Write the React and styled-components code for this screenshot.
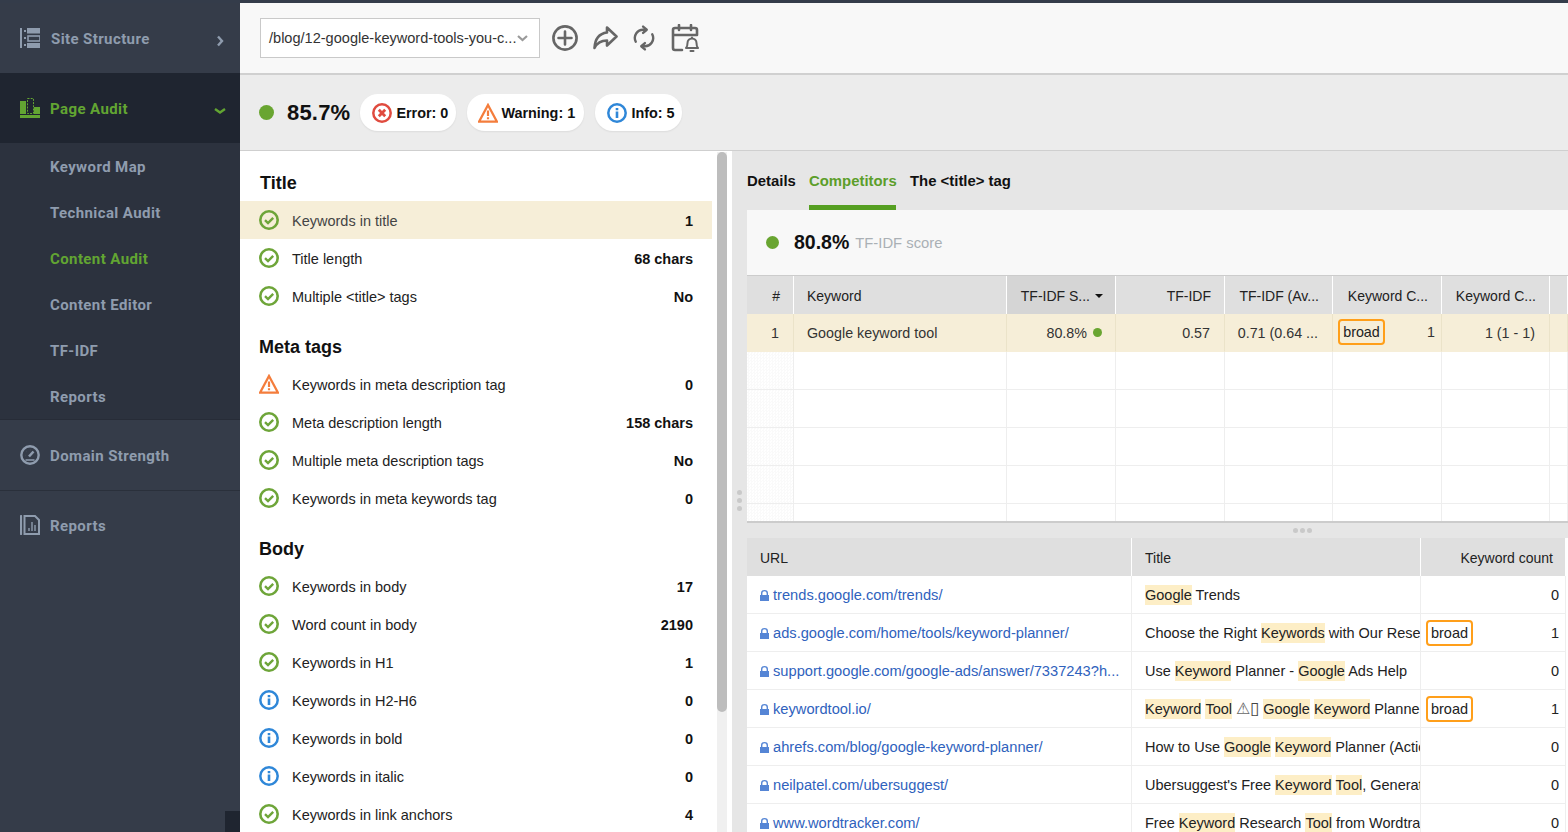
import React from "react";
import styled, { createGlobalStyle } from "styled-components";

const Global = createGlobalStyle`
  html, body { margin: 0; padding: 0; height: 832px; overflow: hidden; background: #fff; }
  body { font-family: "Liberation Sans", Arial, sans-serif; font-size: 14.5px; color: #222; }
  #root { height: 832px; }
  * { box-sizing: border-box; }
`;

const Root = styled.div`
  display: flex;
  width: 1568px;
  height: 832px;
  overflow: hidden;
  border-top: 3px solid #343c4a;
`;

const Sidebar = styled.nav`
  position: relative;
  flex: 0 0 240px;
  display: flex;
  flex-direction: column;
  background: #353c49;
  font-family: Roboto, "Liberation Sans", sans-serif;
  font-weight: 700;
  font-size: 15px;
  letter-spacing: 0.4px;
  color: #8f9cae;
`;

const NavRow = styled.div`
  display: flex;
  align-items: center;
  height: ${(p) => p.$h || 70}px;
  padding: 0 14px 0 20px;
  gap: ${(p) => p.$gap || 10}px;
  background: ${(p) => (p.$active ? "#1f2530" : "transparent")};
  color: ${(p) => (p.$active ? "#62a532" : "inherit")};
  border-bottom: ${(p) => (p.$divider ? "1px solid #2a303b" : "0")};
`;

const NavLabel = styled.span`
  padding-top: ${(p) => p.$pt ?? 2}px;
`;

const NavChevron = styled.svg`
  margin: 6px 0 0 auto;
  width: 12px;
  height: 12px;
  fill: none;
  stroke: currentColor;
  stroke-width: 2.4;
`;

const SubNav = styled.div`
  display: flex;
  flex-direction: column;
  background: #2c323e;
  height: 277px;
  padding-top: 0.5px;
  border-bottom: 1px solid #272c37;
`;

const SubItem = styled.div`
  flex: none;
  display: flex;
  align-items: center;
  height: 46px;
  padding-left: 50px;
  color: ${(p) => (p.$active ? "#62a532" : "#8f9cae")};
`;

const CornerBox = styled.div`
  position: absolute;
  right: 0;
  bottom: 0;
  width: 15px;
  height: 21px;
  background: #1f2530;
`;

const Main = styled.div`
  flex: 1;
  min-width: 0;
  display: flex;
  flex-direction: column;
`;

const Toolbar = styled.div`
  flex: 0 0 72px;
  display: flex;
  align-items: center;
  padding: 0 20px;
  background: #f8f8f8;
  border-bottom: 2px solid #d0d0d0;
`;

const PageSelect = styled.div`
  display: flex;
  align-items: center;
  justify-content: space-between;
  width: 280px;
  height: 40px;
  padding: 0 11px 0 8px;
  background: #fff;
  border: 1px solid #c9c9c9;
  font-size: 14.55px;
  color: #333;
  margin-right: 11px;
`;

const ToolIcon = styled.svg`
  flex: none;
  width: ${(p) => p.$w}px;
  height: 28px;
  margin-right: ${(p) => p.$mr}px;
  fill: none;
  stroke: #666;
  stroke-width: 2.6;
  stroke-linecap: round;
  stroke-linejoin: round;
`;

const StatusBar = styled.div`
  flex: 0 0 76px;
  display: flex;
  align-items: center;
  padding: 0 0 0 19px;
  background: #ececec;
  border-bottom: 1px solid #cfcfcf;
`;

const Dot = styled.span`
  flex: none;
  display: inline-block;
  width: ${(p) => p.$size}px;
  height: ${(p) => p.$size}px;
  border-radius: 50%;
  background: #69a531;
`;

const Score = styled.strong`
  font-size: 22px;
  letter-spacing: 0.2px;
  color: #111;
  margin: 0 10px 0 13px;
`;

const Pill = styled.div`
  display: flex;
  align-items: center;
  gap: ${(p) => p.$gap ?? 4}px;
  width: ${(p) => p.$w}px;
  height: 37px;
  padding: 0 0 0 ${(p) => p.$pl ?? 12}px;
  margin-right: 11px;
  border-radius: 18px;
  background: #fff;
  box-shadow: 0 1px 2px rgba(0, 0, 0, 0.07);
  font-weight: 700;
  font-size: 14.4px;
  color: #111;
`;

const Content = styled.div`
  flex: 1;
  min-height: 0;
  display: flex;
`;

const LeftPanel = styled.div`
  flex: 0 0 492px;
  display: flex;
  background: #fff;
`;

const CheckList = styled.div`
  flex: 0 0 472px;
  overflow: hidden;
`;

const Track = styled.div`
  flex: 0 0 10px;
  margin: 1px 5px 0;
  background: #f0f0f0;
`;

const Thumb = styled.div`
  height: 560px;
  background: #bdbdbd;
  border-radius: 5px;
`;

const SectionHead = styled.h3`
  margin: 0;
  height: 50px;
  padding: 23px 0 0 ${(p) => p.$indent}px;
  font-size: 18px;
  line-height: 18px;
  font-weight: 700;
  color: #111;
`;

const CheckRow = styled.div`
  display: flex;
  align-items: center;
  height: 38px;
  padding: 0 19px;
  background: ${(p) => (p.$active ? "#f6eed8" : "transparent")};
  color: ${(p) => (p.$active ? "#444" : "#222")};
`;

const CheckLabel = styled.span`
  margin-left: 13px;
  padding-top: 2px;
`;

const CheckValue = styled.strong`
  margin-left: auto;
  padding-top: 2px;
  color: #111;
`;

const StatusIcon = styled.svg`
  flex: none;
  width: 20px;
  height: 20px;
  fill: none;
`;

const RightPanel = styled.div`
  flex: 1;
  min-width: 0;
  display: flex;
  background: #e6e6e6;
`;

const Gutter = styled.div`
  flex: 0 0 15px;
  display: flex;
  flex-direction: column;
  align-items: center;
  gap: 3px;
  padding-top: 339px;
`;

const GripDot = styled.span`
  display: block;
  width: 5px;
  height: 5px;
  border-radius: 50%;
  background: #c9c9c9;
`;

const Pane = styled.div`
  flex: 1;
  min-width: 0;
  display: flex;
  flex-direction: column;
`;

const Tabs = styled.div`
  flex: 0 0 59px;
  display: flex;
`;

const Tab = styled.div`
  width: ${(p) => p.$w}px;
  margin-right: ${(p) => p.$mr}px;
  height: 59px;
  padding-top: 22px;
  line-height: 16px;
  font-weight: 700;
  font-size: 14.9px;
  white-space: nowrap;
  color: ${(p) => (p.$active ? "#5c9e2a" : "#111")};
  border-bottom: 5px solid ${(p) => (p.$active ? "#559f21" : "transparent")};
`;

const ScoreCard = styled.div`
  flex: 0 0 66px;
  display: flex;
  align-items: center;
  padding-left: 19px;
  background: #f8f8f8;
  border-bottom: 1px solid #cccccc;
`;

const CardScore = styled.strong`
  font-size: 19.5px;
  color: #111;
  margin: 0 6px 0 15px;
`;

const CardLabel = styled.span`
  font-size: 14.8px;
  color: #aab0b5;
`;

const TableWrap = styled.div`
  flex: 0 0 ${(p) => p.$h}px;
  background: #fff;
  overflow: hidden;
  border-bottom: ${(p) => (p.$closed ? "2px solid #cccccc" : "0")};
`;

const Table = styled.table`
  table-layout: fixed;
  border-collapse: separate;
  border-spacing: 0;
  width: ${(p) => p.$w}px;
`;

const Th = styled.th`
  height: 38px;
  padding: 2px ${(p) => p.$pr ?? 13}px 0 ${(p) => p.$pl ?? 13}px;
  background: ${(p) => (p.$sorted ? "#d5d5d5" : "#dfdfdf")};
  border-right: 1px solid #fff;
  font-size: 14px;
  font-weight: 400;
  color: #222;
  text-align: ${(p) => p.$align || "right"};
  white-space: nowrap;
  overflow: hidden;
`;

const Caret = styled.span`
  display: inline-block;
  margin: 0 0 3px 5px;
  width: 0;
  height: 0;
  border-left: 4px solid transparent;
  border-right: 4px solid transparent;
  border-top: 4px solid #111;
`;

const Td = styled.td`
  height: 38px;
  padding: 0 ${(p) => p.$pr ?? 14}px ${(p) => p.$pb ?? 0}px ${(p) => p.$pl ?? 13}px;
  background: ${(p) => (p.$active ? "#f6eed8" : "transparent")};
  border-right: 1px solid ${(p) => (p.$active ? "#ebe3c9" : "#eeeeee")};
  border-bottom: 1px solid ${(p) => (p.$active ? "#f6eed8" : "#eeeeee")};
  font-size: 14.3px;
  color: ${(p) => (p.$active ? "#333" : "#222")};
  text-align: ${(p) => p.$align || "right"};
  white-space: nowrap;
  overflow: hidden;
`;

const TextureTd = styled(Td)`
  background-image: repeating-conic-gradient(#fafafa 0 25%, #fff 0 50%);
  background-size: 3px 3px;
`;

const UrlTd = styled(Td)`
  font-size: 14.67px;
`;

const TitleTd = styled(Td)`
  font-size: 14.5px;
`;

const CountTd = styled(Td)`
  font-size: 14.5px;
`;

const Inline = styled.span`
  display: flex;
  align-items: center;
  justify-content: ${(p) => p.$justify || "flex-end"};
  gap: ${(p) => p.$gap || 0}px;
`;

const Broad = styled.span`
  display: inline-block;
  width: 47px;
  height: 26px;
  line-height: 23px;
  text-align: center;
  border: 2px solid #ff9f1a;
  border-radius: 4px;
  color: #222;
`;

const SplitBar = styled.div`
  flex: 0 0 15px;
  display: flex;
  align-items: center;
  gap: 2px;
  padding-left: 546px;
`;

const UrlLink = styled.a`
  color: #2f62bd;
  text-decoration: none;
`;

const Lock = styled.svg`
  width: 9px;
  height: 11px;
  margin: 0 4px -1px 0;
  fill: #5585d5;
`;

const Mark = styled.span`
  display: inline-block;
  height: 20px;
  line-height: 20px;
  background: #fdeec6;
  color: #222;
`;

const WarnGlyph = styled.span`
  color: #666;
  font-size: 16px;
  line-height: 1;
`;

const TofuGlyph = styled.span`
  font-size: 17px;
  line-height: 1;
  font-weight: 400;
  color: #444;
`;

/* ---------- drawings ---------- */

const CheckIcon = () => (
  <StatusIcon viewBox="0 0 20 20">
    <circle cx="10" cy="10" r="8.7" stroke="#6ea539" strokeWidth="2.6" />
    <path d="M6 10.2l3 2.9 5.2-5.3" stroke="#6ea539" strokeWidth="2.4" />
  </StatusIcon>
);
const WarnIcon = () => (
  <StatusIcon viewBox="0 0 20 20">
    <path d="M10 2L19 18.7H1z" stroke="#f47d3c" strokeWidth="2.3" strokeLinejoin="miter" />
    <path d="M10 7.5v5.5M10 14.3v2" stroke="#f47d3c" strokeWidth="2.2" />
  </StatusIcon>
);
const InfoIcon = () => (
  <StatusIcon viewBox="0 0 20 20">
    <circle cx="10" cy="10" r="8.7" stroke="#2f87d8" strokeWidth="2.5" />
    <path d="M10 8.500v6.500M10 5v2.200" stroke="#2f87d8" strokeWidth="2.6" />
  </StatusIcon>
);
const ErrorIcon = () => (
  <StatusIcon viewBox="0 0 20 20">
    <circle cx="10" cy="10" r="8.7" stroke="#e04b3f" strokeWidth="2.5" />
    <path d="M6.800 6.800l6.400 6.400M13.200 6.800l-6.400 6.400" stroke="#e04b3f" strokeWidth="2.8" />
  </StatusIcon>
);
const icons = { ok: CheckIcon, warn: WarnIcon, info: InfoIcon };

const SiteIcon = () => (
  <svg width="20" height="20" viewBox="0 0 20 20" fill="#8f9cae">
    <rect x="0" y="0" width="2" height="20" />
    <rect x="4" y="2" width="2" height="2" />
    <rect x="4" y="9" width="2" height="2" />
    <rect x="4" y="16" width="2" height="2" />
    <rect x="7" y="0" width="13" height="5.500" />
    <rect x="8" y="8" width="12" height="5" fill="none" stroke="#8f9cae" strokeWidth="1.600" />
    <rect x="7" y="15" width="13" height="5" />
  </svg>
);
const AuditIcon = () => (
  <svg width="20" height="20" viewBox="0 0 20 20" fill="#62a532">
    <rect x="0" y="3" width="6" height="13" />
    <rect x="7.500" y="0.500" width="6" height="15" fill="none" stroke="#62a532" strokeDasharray="2 1.200" />
    <rect x="14" y="9" width="6" height="7" />
    <rect x="0" y="17" width="20" height="3" />
  </svg>
);
const GaugeIcon = () => (
  <svg width="20" height="20" viewBox="0 0 20 20" fill="none" stroke="#8f9cae" strokeWidth="2.400">
    <circle cx="10" cy="10" r="8.700" />
    <path d="M9 11.500l4.500-5" strokeWidth="2.600" />
    <path d="M5 10.500h.1M6.500 6.500h.1M10 5h.1M5.500 15h9" strokeWidth="1.600" />
  </svg>
);
const ReportIcon = () => (
  <svg width="20" height="20" viewBox="0 0 20 20" fill="none" stroke="#8f9cae">
    <path d="M1 1v18" strokeWidth="2.200" strokeLinecap="round" />
    <path d="M4.500 1H15l4 4v14H4.500z" strokeWidth="2" />
    <path d="M9 16v-3M12 16V7M15 16v-6" strokeWidth="1.400" />
  </svg>
);

const LockIcon = () => (
  <Lock viewBox="0 0 9 11">
    <path d="M0 5h1V3.200a3.500 3.200 0 0 1 7 0V5h1v6H0zM2.400 5h4.200V3.200a2.100 2 0 0 0-4.200 0z" />
  </Lock>
);

/* ---------- data ---------- */

const sections = [
  {
    title: "Title",
    indent: 20,
    rows: [
      ["ok", "Keywords in title", "1", true],
      ["ok", "Title length", "68 chars"],
      ["ok", "Multiple <title> tags", "No"],
    ],
  },
  {
    title: "Meta tags",
    indent: 19,
    rows: [
      ["warn", "Keywords in meta description tag", "0"],
      ["ok", "Meta description length", "158 chars"],
      ["ok", "Multiple meta description tags", "No"],
      ["ok", "Keywords in meta keywords tag", "0"],
    ],
  },
  {
    title: "Body",
    indent: 19,
    rows: [
      ["ok", "Keywords in body", "17"],
      ["ok", "Word count in body", "2190"],
      ["ok", "Keywords in H1", "1"],
      ["info", "Keywords in H2-H6", "0"],
      ["info", "Keywords in bold", "0"],
      ["info", "Keywords in italic", "0"],
      ["ok", "Keywords in link anchors", "4"],
    ],
  },
];

const subNav = ["Keyword Map", "Technical Audit", "Content Audit", "Content Editor", "TF-IDF", "Reports"];

const kwCols = [47, 213, 109, 109, 108, 109, 108, 18];
const urlCols = [385, 289, 145];

const K = ({ children }) => <Mark>{children}</Mark>;

const urlRows = [
  ["trends.google.com/trends/", <><K>Google</K> Trends</>, false, 0],
  ["ads.google.com/home/tools/keyword-planner/", <>Choose the Right <K>Keywords</K> with Our Research Tools</>, true, 1],
  ["support.google.com/google-ads/answer/7337243?h...", <>Use <K>Keyword</K> Planner - <K>Google</K> Ads Help</>, false, 0],
  ["keywordtool.io/", <><K>Keyword</K> <K>Tool</K> <WarnGlyph>⚠</WarnGlyph><TofuGlyph>▯</TofuGlyph> <K>Google</K> <K>Keyword</K> Planner Alternative</>, true, 1],
  ["ahrefs.com/blog/google-keyword-planner/", <>How to Use <K>Google</K> <K>Keyword</K> Planner (Actionable Guide)</>, false, 0],
  ["neilpatel.com/ubersuggest/", <>Ubersuggest's Free <K>Keyword</K> <K>Tool</K>, Generate Keyword Ideas</>, false, 0],
  ["www.wordtracker.com/", <>Free <K>Keyword</K> Research <K>Tool</K> from Wordtracker</>, false, 0],
];

export default function App() {
  return (
    <>
      <Global />
      <Root>
        <Sidebar>
          <NavRow $gap={11}>
            <SiteIcon />
            <NavLabel>Site Structure</NavLabel>
            <NavChevron viewBox="0 0 12 12"><path d="M4 1.500l4 4.500-4 4.500" /></NavChevron>
          </NavRow>
          <NavRow $active>
            <AuditIcon />
            <NavLabel>Page Audit</NavLabel>
            <NavChevron viewBox="0 0 12 12"><path d="M1 4l5 3.500L11 4" /></NavChevron>
          </NavRow>
          <SubNav>
            {subNav.map((s) => (
              <SubItem key={s} $active={s === "Content Audit"}>{s}</SubItem>
            ))}
          </SubNav>
          <NavRow $divider $h={71}>
            <GaugeIcon />
            <NavLabel $pt={1}>Domain Strength</NavLabel>
          </NavRow>
          <NavRow $h={68}>
            <ReportIcon />
            <NavLabel $pt={1}>Reports</NavLabel>
          </NavRow>
          <CornerBox />
        </Sidebar>

        <Main>
          <Toolbar>
            <PageSelect>
              <span>/blog/12-google-keyword-tools-you-c...</span>
              <svg width="11" height="7" viewBox="0 0 11 7" fill="none" stroke="#9a9a9a" strokeWidth="2.200">
                <path d="M1 1l4.500 4L10 1" />
              </svg>
            </PageSelect>
            <ToolIcon $w={28} $mr={13} viewBox="0 0 28 28">
              <circle cx="14" cy="14" r="11.600" />
              <path d="M14 7.500v13M7.500 14h13" />
            </ToolIcon>
            <ToolIcon $w={26} $mr={15} viewBox="0 0 26 28">
              <path d="M15 3.500l9.500 9-9.500 9v-5c-6 0-10 2.500-12.500 7.500C3 15 7 9.500 15 8.500z" />
            </ToolIcon>
            <ToolIcon $w={22} $mr={16} viewBox="0 0 24 28">
              <path d="M3 18A9 9 0 0 1 12 5h2M21 10a9 9 0 0 1-9 13h-2" />
              <path d="M11 1.500L15 5l-4 3.500M13 19.500L9 23l4 3.500" />
            </ToolIcon>
            <ToolIcon $w={28} $mr={0} viewBox="0 0 28 28">
              <path d="M11 26H4a2 2 0 0 1-2-2V6a2 2 0 0 1 2-2h20a2 2 0 0 1 2 2v5M2 11h24M8 1v5M20 1v5" />
              <path d="M15 24c1-1 1.500-2.500 1.500-5a4.500 4.500 0 0 1 9 0c0 2.500.5 4 1.500 5zM21 13.500v1M19.500 27h3" strokeWidth="2" />
            </ToolIcon>
          </Toolbar>

          <StatusBar>
            <Dot $size={15} />
            <Score>85.7%</Score>
            <Pill $w={96}><ErrorIcon />Error: 0</Pill>
            <Pill $w={117} $pl={11} $gap={3}><WarnIcon />Warning: 1</Pill>
            <Pill $w={87}><InfoIcon />Info: 5</Pill>
          </StatusBar>

          <Content>
            <LeftPanel>
              <CheckList>
                {sections.map((sec) => (
                  <section key={sec.title}>
                    <SectionHead $indent={sec.indent}>{sec.title}</SectionHead>
                    {sec.rows.map(([kind, label, value, active]) => {
                      const Icon = icons[kind];
                      return (
                        <CheckRow key={label} $active={active}>
                          <Icon />
                          <CheckLabel>{label}</CheckLabel>
                          <CheckValue>{value}</CheckValue>
                        </CheckRow>
                      );
                    })}
                  </section>
                ))}
              </CheckList>
              <Track><Thumb /></Track>
            </LeftPanel>

            <RightPanel>
              <Gutter><GripDot /><GripDot /><GripDot /></Gutter>
              <Pane>
                <Tabs>
                  <Tab $w={49} $mr={13}>Details</Tab>
                  <Tab $w={87} $mr={14} $active>Competitors</Tab>
                  <Tab $w={103} $mr={0}>The &lt;title&gt; tag</Tab>
                </Tabs>
                <ScoreCard>
                  <Dot $size={13} />
                  <CardScore>80.8%</CardScore>
                  <CardLabel>TF-IDF score</CardLabel>
                </ScoreCard>

                <TableWrap $h={247} $closed>
                  <Table $w={821}>
                    <colgroup>{kwCols.map((w, i) => <col key={i} style={{ width: w }} />)}</colgroup>
                    <thead>
                      <tr>
                        <Th>#</Th>
                        <Th $align="left">Keyword</Th>
                        <Th $sorted $pr={12} $pl={0}>TF-IDF S...<Caret /></Th>
                        <Th>TF-IDF</Th>
                        <Th $pl={0}>TF-IDF (Av...</Th>
                        <Th $pl={0}>Keyword C...</Th>
                        <Th $pl={0}>Keyword C...</Th>
                        <Th $pl={0} $pr={0} />
                      </tr>
                    </thead>
                    <tbody>
                      <tr>
                        <Td $active>1</Td>
                        <Td $active $align="left">Google keyword tool</Td>
                        <Td $active $pr={13} $pl={0}><Inline $gap={6}>80.8% <Dot $size={9} /></Inline></Td>
                        <Td $active>0.57</Td>
                        <Td $active $pl={0}>0.71 (0.64 ...</Td>
                        <Td $active $pl={5} $pr={6} $pb={2}><Inline $justify="space-between"><Broad>broad</Broad>1</Inline></Td>
                        <Td $active $pl={0}>1 (1 - 1)</Td>
                        <Td $active $pl={0} $pr={0} />
                      </tr>
                      {[0, 1, 2, 3, 4].map((r) => (
                        <tr key={r}>
                          <TextureTd />
                          {[1, 2, 3, 4, 5, 6, 7].map((c) => <Td key={c} />)}
                        </tr>
                      ))}
                    </tbody>
                  </Table>
                </TableWrap>

                <SplitBar><GripDot /><GripDot /><GripDot /></SplitBar>

                <TableWrap $h={296}>
                  <Table $w={819}>
                    <colgroup>{urlCols.map((w, i) => <col key={i} style={{ width: w }} />)}</colgroup>
                    <thead>
                      <tr>
                        <Th $align="left">URL</Th>
                        <Th $align="left">Title</Th>
                        <Th $pr={12} $pl={0}>Keyword count</Th>
                      </tr>
                    </thead>
                    <tbody>
                      {urlRows.map(([url, title, broad, count]) => (
                        <tr key={url}>
                          <UrlTd $align="left"><LockIcon /><UrlLink href="#">{url}</UrlLink></UrlTd>
                          <TitleTd $align="left" $pr={0}>{title}</TitleTd>
                          <CountTd $pl={5} $pr={6}>
                            <Inline $justify={broad ? "space-between" : "flex-end"}>
                              {broad && <Broad>broad</Broad>}
                              {count}
                            </Inline>
                          </CountTd>
                        </tr>
                      ))}
                    </tbody>
                  </Table>
                </TableWrap>
              </Pane>
            </RightPanel>
          </Content>
        </Main>
      </Root>
    </>
  );
}
